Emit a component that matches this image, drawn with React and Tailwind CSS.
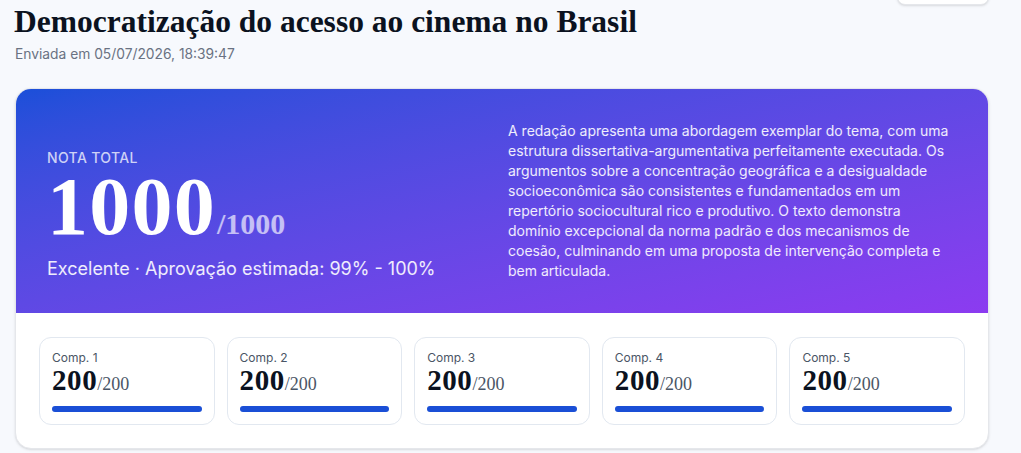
import { useState } from "react"

const COMPETENCIAS = [
  { id: 1, nota: 200, max: 200 },
  { id: 2, nota: 200, max: 200 },
  { id: 3, nota: 200, max: 200 },
  { id: 4, nota: 200, max: 200 },
  { id: 5, nota: 200, max: 200 },
]

const FEEDBACK =
  "A redação apresenta uma abordagem exemplar do tema, com uma estrutura dissertativa-argumentativa perfeitamente executada. Os argumentos sobre a concentração geográfica e a desigualdade socioeconômica são consistentes e fundamentados em um repertório sociocultural rico e produtivo. O texto demonstra domínio excepcional da norma padrão e dos mecanismos de coesão, culminando em uma proposta de intervenção completa e bem articulada."

export default function App() {
  const [comps] = useState(COMPETENCIAS)

  return (
    <div className="min-h-screen bg-[#f7f9fd] pl-[15px] pr-[32px] font-['Inter',sans-serif]">
      <header className="flex items-start justify-between pt-[3px]">
        <div>
          <h1 className="text-[31.5px] leading-[38px] font-bold text-[#0b1220] font-['Liberation_Serif',serif] -ml-px">
            Democratização do acesso ao cinema no Brasil
          </h1>
          <p className="mt-[3px] text-[13.8px] leading-5 text-gray-500">
            Enviada em 05/07/2026, 18:39:47
          </p>
        </div>
        <button
          aria-label="Ações"
          className="-mt-[34px] h-9 w-[92px] rounded-lg border border-gray-200 bg-white shadow-sm"
        />
      </header>

      <section className="mt-6 overflow-hidden rounded-2xl border border-gray-200 bg-white shadow-sm">
        <div className="flex items-center bg-gradient-to-br from-[#1a4fd9] to-[#8c3bf0] px-[31px] py-8">
          <div className="w-[461px] shrink-0 pt-7">
            <p className="text-[14px] leading-4 font-medium tracking-wide text-white/75">NOTA TOTAL</p>
            <div className="flex items-baseline font-['Liberation_Serif',serif] font-bold">
              <span className="text-[82px] leading-none tracking-[0.015em] text-white">1000</span>
              <span className="ml-px text-[30px] leading-none text-white/65">/1000</span>
            </div>
            <p className="mt-[9px] text-[18px] leading-6 text-white/90">
              Excelente · Aprovação estimada: 99% - 100%
            </p>
          </div>
          <p className="w-[449px] text-[14px] leading-5 text-white/90">{FEEDBACK}</p>
        </div>

        <div className="grid grid-cols-5 gap-3 px-[23px] pt-6 pb-[23px]">
          {comps.map((c) => (
            <div key={c.id} className="rounded-xl border border-slate-200 p-3">
              <p className="text-[12px] leading-4 text-gray-600">Comp. {c.id}</p>
              <div className="flex items-baseline font-['Liberation_Serif',serif] font-bold leading-7">
                <span className="text-[29px] tracking-[0.02em] text-[#0b1220]">{c.nota}</span>
                <span className="text-[18px] font-normal text-gray-600">/{c.max}</span>
              </div>
              <div className="mt-2 h-1.5 rounded-full bg-slate-100">
                <div
                  className="h-1.5 rounded-full bg-[#1a4fd6]"
                  style={{ width: `${(c.nota / c.max) * 100}%` }}
                />
              </div>
            </div>
          ))}
        </div>
      </section>
    </div>
  )
}
